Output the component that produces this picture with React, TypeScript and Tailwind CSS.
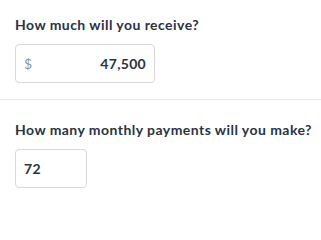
import React from 'react';

const font = { fontFamily: 'Lato, "Noto Sans", sans-serif' };

export default function App() {
  return (
    <div className="w-[321px] h-[205px] bg-white text-[#2a3342] overflow-hidden" style={font}>
      <div className="px-[15px] pt-[15px] pb-[16px]">
        <h2 className="text-[14px] leading-[20px] font-bold tracking-[0.45px] whitespace-nowrap">How much will you receive?</h2>
        <div className="mt-[9px] flex items-center justify-between w-[140px] h-[39px] border border-[#d6d9de] rounded-[4px] pl-[8px] pr-[8px]">
          <span className="text-[14px] text-[#8a94a3]">$</span>
          <span className="text-[14px] font-bold tracking-[0.3px]">47,500</span>
        </div>
      </div>
      <div className="border-t border-[#e6e8eb]" />
      <div className="px-[15px] pt-[20px]">
        <h2 className="text-[14px] leading-[20px] font-bold tracking-[0.45px] whitespace-nowrap">How many monthly payments will you make?</h2>
        <div className="mt-[9px] flex items-center w-[72px] h-[39px] border border-[#d6d9de] rounded-[4px] pl-[8px]">
          <span className="text-[14px] font-bold tracking-[0.3px]">72</span>
        </div>
      </div>
    </div>
  );
}
